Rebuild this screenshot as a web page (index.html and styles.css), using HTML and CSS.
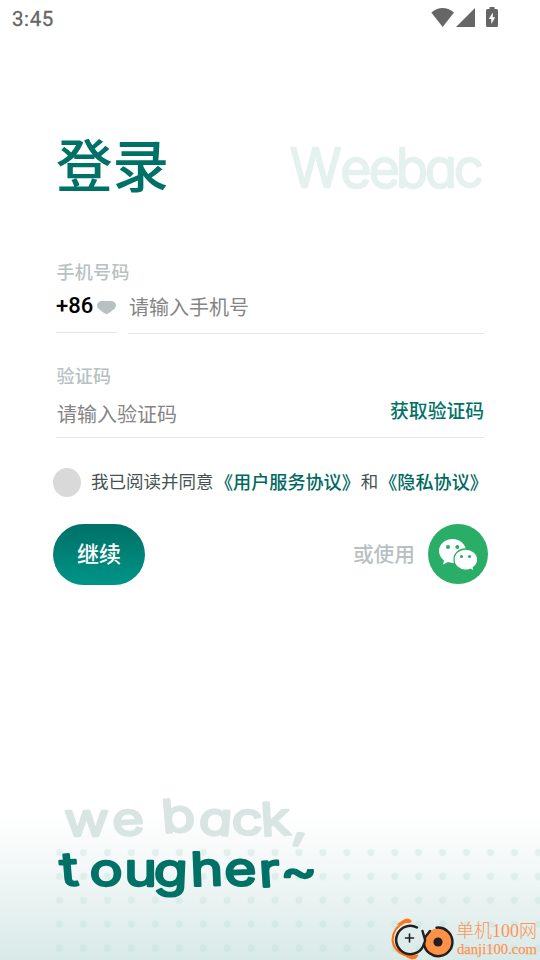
FILE: index.html
```html
<!DOCTYPE html>
<html lang="zh-CN">
<head>
<meta charset="utf-8">
<title>登录</title>
<link rel="stylesheet" href="styles.css">
</head>
<body>
<div class="screen">
  <header class="status">
    <span class="clock">3:45</span>
    <svg class="status-icons" width="70" height="22" viewBox="430 6 70 22" fill="#666">
      <path d="M431.3 12.4Q442.6 3.6 454 12.4L442.7 27Z"/>
      <path d="M475 8V27H456Z"/>
      <path d="M489.500 9V7H494.500V9H496.500Q498 9 498 10.500V25.500Q498 27 496.500 27H487.500Q486 27 486 25.500V10.500Q486 9 487.500 9Z"/>
      <path fill="#fff" d="M492.800 12.500L488.800 19H491.300V24L495.200 17.300H492.800Z"/>
    </svg>
  </header>
  <main class="content">
    <div class="heading">
      <h1>登录</h1>
      <svg class="wordmark" width="200" height="50" viewBox="287 142 200 50">
        <text y="187" x="290 340.500 369 396 425 454">Weebac</text>
      </svg>
    </div>
    <section class="phone">
      <label class="label">手机号码</label>
      <div class="phone-row">
        <div class="code">+86
          <svg width="19" height="14" viewBox="0 0 19 14"><path fill="#b7c1c1" d="M4 0H15Q19 1 19 4.500Q19 7 16.500 8.500L12 12Q9.500 14 7 12L2.500 8.500Q0 7 0 4.500Q0 1 4 0Z"/></svg>
        </div>
        <div class="number">请输入手机号</div>
      </div>
    </section>
    <section class="verify">
      <label class="label">验证码</label>
      <div class="verify-row"><span class="hint">请输入验证码</span><a class="get">获取验证码</a></div>
    </section>
    <div class="agree">
      <span class="check"></span>
      <span class="terms">我已阅读并同意</span>
      <a class="service">《用户服务协议》</a><span class="and">和</span><a class="privacy">《隐私协议》</a>
    </div>
    <div class="actions">
      <button>继续</button>
      <span class="or">或使用</span>
      <svg class="wechat" width="60" height="60" viewBox="0 0 60 60">
        <circle cx="30" cy="30" r="30" fill="#2aae67"/>
        <path fill="#fff" d="M24.500 15C17 15 11 20 11 27C11 31 13 34 16 36.500L15 40.500L20 38C22 38.700 24 39 26 39C32 39 38 34 38 27C38 20 32 15 24.500 15Z"/>
        <path fill="#fff" stroke="#2aae67" stroke-width="1.300" d="M37.500 25C31 25 26 29.500 26 35.500C26 41.500 31 46.200 37.500 46.200Q40 46.200 42.500 45.300L46 47.300L45.300 43.500C48 41.700 49.700 39 49.700 35.500C49.700 29.500 44 25 37.500 25Z"/>
        <g fill="#2aae67"><circle cx="20" cy="23" r="2"/><circle cx="29.300" cy="23" r="2"/><circle cx="33.500" cy="32.500" r="1.600"/><circle cx="41.500" cy="32.500" r="1.600"/></g>
      </svg>
    </div>
  </main>
  <footer class="foot">
    <svg width="540" height="180" viewBox="0 780 540 180">
      <defs>
        <linearGradient id="fade" x1="0" y1="0" x2="0" y2="1"><stop offset="0" stop-color="#fff"/><stop offset=".35" stop-color="#f4f8f8"/><stop offset="1" stop-color="#d8eae8"/></linearGradient>
        <pattern id="dots" x="47.500" y="840.500" width="23.950" height="23.900" patternUnits="userSpaceOnUse"><circle cx="12" cy="12" r="3.600" fill="#b9ddd6" fill-opacity=".32"/></pattern>
      </defs>
      <rect y="812" width="540" height="148" fill="url(#fade)"/>
      <rect x="47.500" y="840.500" width="492.500" height="119.500" fill="url(#dots)"/>
      <g class="slogan">
        <text class="pale" transform="translate(64 836) scale(1.250 1.040)" x="0 39.500 70 79 107 134 158 182" y="0 0 0 -3 -2 -1 0 1" rotate="0 -4 0 -4 4 0 -3 8">we back,</text>
        <text class="strong" transform="translate(60 887) scale(1.260 1.050)" x="1 23.500 51 74 104 131 158.500 175" y="-1 -1 -1 -1 -1 -1 0 0" rotate="-4 0 0 2 -2 -3 -3 0">tougher~</text>
      </g>
      <g fill="none" stroke-linecap="round">
        <path d="M405 922C388 930 389 950 405 955" stroke="#ff7417" stroke-width="2.200"/>
        <path d="M398 924Q402 921 405 919.500Q408 918 411 920.500Q412 923 407 922.500Q402 922 398 924M403 954Q409 957 418 955Q417 959 412 959Q407 958 403 954" fill="#ff7417" stroke="#ff7417"/>
        <path d="M417 927.500A14.200 14.200 0 1 0 424 944" stroke="#231f20" stroke-width="2.500"/>
        <path d="M405.500 938H413.500M409.500 934V942" stroke="#231f20" stroke-width="1.600"/>
        <circle cx="438" cy="942" r="13.500" fill="#ff9147"/>
        <path d="M422.500 931L424.500 938L430 931M425 938Q425.500 941 424 944" stroke="#231f20" stroke-width="2.400"/>
        <path d="M436.500 927.700A14.300 14.300 0 1 1 424 944" stroke="#231f20" stroke-width="2.500"/>
        <circle cx="438" cy="942" r="4.600" fill="#231f20"/>
      </g>
      <text class="mark-cn" x="456" y="937" textLength="81" lengthAdjust="spacingAndGlyphs">单机100网</text>
      <text class="mark-url" x="457" y="954" textLength="80" lengthAdjust="spacingAndGlyphs">danji100.com</text>
    </svg>
  </footer>
</div>
</body>
</html>
```
FILE: styles.css
```css
* { box-sizing: border-box; }
body { margin: 0; background: #fff; font-family: "Noto Sans CJK SC", sans-serif; }
.screen { width: 540px; height: 960px; display: flex; flex-direction: column; overflow: hidden; }
svg { display: block; flex: none; }
.status { height: 38px; padding: 6px 40px 0 12px; display: flex; justify-content: space-between; align-items: flex-start; }
.clock { font: 400 20.5px/26px Roboto, sans-serif; color: #666; letter-spacing: .6px; -webkit-text-stroke: .3px #666; }
.content { flex: 1; padding: 89px 52px 0 56px; }
.heading { height: 75px; display: flex; justify-content: space-between; }
h1 { margin: 0; font-size: 56.5px; line-height: 71px; font-weight: 500; color: #007167; }
.wordmark { margin: 15px 1px 0 0; overflow: visible; }
.wordmark text { font: 300 53px Inter, sans-serif; font-feature-settings: "cv11"; fill: #e5f1ef; stroke: #e5f1ef; stroke-width: 2.6px; stroke-linejoin: round; }
.label { display: block; padding-left: .5px; font-size: 18px; line-height: 24px; font-weight: 500; color: #b7c1c1; letter-spacing: .3px; }
.phone { margin-top: 57px; }
.phone-row { display: flex; gap: 11px; margin-right: 4px; }
.code { width: 61px; height: 50px; border-bottom: 1px solid #e5e7e7; display: flex; align-items: flex-start; gap: 4px; padding-top: 9px; font: 500 22px/28px Roboto, sans-serif; color: #000; }
.code svg { margin-top: 9px; }
.number { flex: 1; height: 51px; border-bottom: 1px solid #e5e7e7; padding: 10px 0 0 1px; font-size: 20px; line-height: 28px; color: #858585; }
.verify { margin: 29px 4px 0 0; }
.verify-row { height: 51px; border-bottom: 1px solid #e5e7e7; display: flex; justify-content: space-between; align-items: flex-start; padding-top: 9px; }
.hint { margin: 4px 0 0 1px; font-size: 20px; line-height: 28px; color: #858585; }
.get { font-size: 18.8px; line-height: 28px; font-weight: 500; color: #007167; }
.agree { display: flex; align-items: center; height: 29px; margin: 30px -4px 0 -3px; white-space: nowrap; color: #465250; font-size: 17.5px; line-height: 26px; }
.check { width: 28px; height: 29px; border-radius: 50%; background: #d9d9d9; margin-right: 10px; }
.terms, .service, .and, .privacy { flex: none; padding-bottom: 4px; }
.service, .privacy { font-size: 18.1px; font-weight: 500; color: #00695f; }
.service { margin-left: 1.5px; }
.and { margin: 0 1px 0 1px; }
.actions { display: flex; align-items: flex-start; margin: 27px 0 0 -3px; }
button { width: 92px; height: 61px; border: 0; border-radius: 31px; padding: 0 0 4px; background: linear-gradient(#007067, #009488); color: #fff; font: 500 22px/57px "Noto Sans CJK SC", sans-serif; }
.or { margin: 14px 13px 0 auto; font-size: 20.7px; line-height: 30px; font-weight: 500; color: #b7c1c1; }
.foot { height: 180px; }
.slogan { font: 400 46px Inter, sans-serif; font-feature-settings: "cv11"; stroke-linejoin: round; }
.pale { font-size: 44px; fill: #d8e5e3; stroke: #d8e5e3; stroke-width: 2.2px; }
.strong { font-size: 44px; fill: #007167; stroke: #007167; stroke-width: 2.2px; }
.mark-cn { font: 18.5px "Liberation Serif", "Noto Sans CJK SC", serif; font-weight: 300; fill: #ff9453; }
.mark-url { font: 15px "Liberation Serif", serif; fill: #ff9453; stroke: #ff9453; stroke-width: .25px; }
```
